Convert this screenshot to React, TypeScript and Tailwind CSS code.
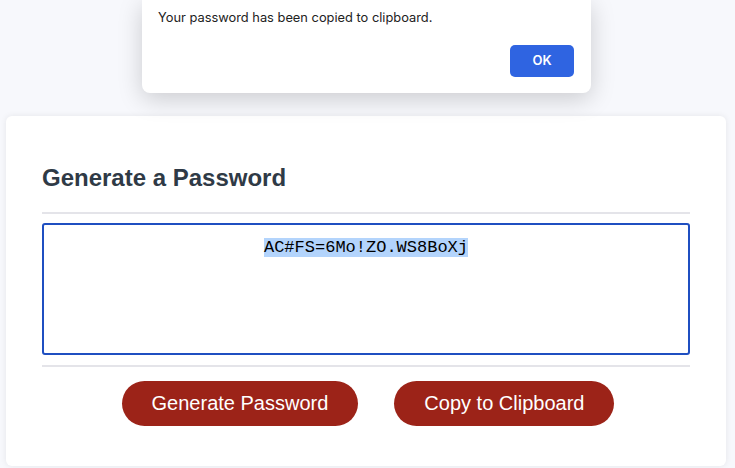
import React from "react";

const password = "AC#FS=6Mo!ZO.WS8BoXj";

const App: React.FC = () => {
  return (
    <div className="relative min-h-screen w-full bg-[#f7f8fc] pt-[116px] font-['Liberation_Sans',Arial,sans-serif]">
      <div className="ml-[6px] w-[720px] rounded-md bg-white px-[36px] pt-[48px] pb-[40px] shadow-[0_0_6px_rgba(0,0,0,0.08)]">
        <h2 className="text-[24px] leading-[28px] font-bold text-[#2f3a46]">Generate a Password</h2>
        <hr className="mt-[20px] h-[2px] border-0 bg-[#e4e4e9]" />
        <div className="mt-[9px] h-[132px] rounded-[3px] border-2 border-[#1f4fc1] bg-white pt-[14px] text-center font-['Liberation_Mono','Courier_New',monospace] text-[17px] leading-[18px] text-black">
          <span className="bg-[#b3d4fc]">{password}</span>
        </div>
        <hr className="mt-[10px] h-[2px] border-0 bg-[#e4e4e9]" />
        <div className="mt-[14px] flex justify-center gap-[36px] pl-[4px]">
          <button className="h-[45px] rounded-full bg-[#9c2318] px-[30px] text-[20px] leading-[23px] text-white">
            Generate Password
          </button>
          <button className="h-[45px] rounded-full bg-[#9c2318] px-[30px] text-[20px] leading-[23px] text-white">
            Copy to Clipboard
          </button>
        </div>
      </div>

      <div className="absolute top-0 left-[142px] flex h-[93px] w-[449px] flex-col rounded-b-lg bg-white px-4 pt-[10px] shadow-[0_6px_24px_rgba(0,0,0,0.18)] font-['Inter',sans-serif]">
        <p className="text-[12.85px] leading-[16px] text-[#222]">Your password has been copied to clipboard.</p>
        <div className="mt-[19px] flex justify-end pr-px">
          <button className="h-[32px] w-[64px] rounded-[5px] bg-[#2f64e1] text-[13px] font-semibold text-white">OK</button>
        </div>
      </div>
    </div>
  );
};

export default App;
